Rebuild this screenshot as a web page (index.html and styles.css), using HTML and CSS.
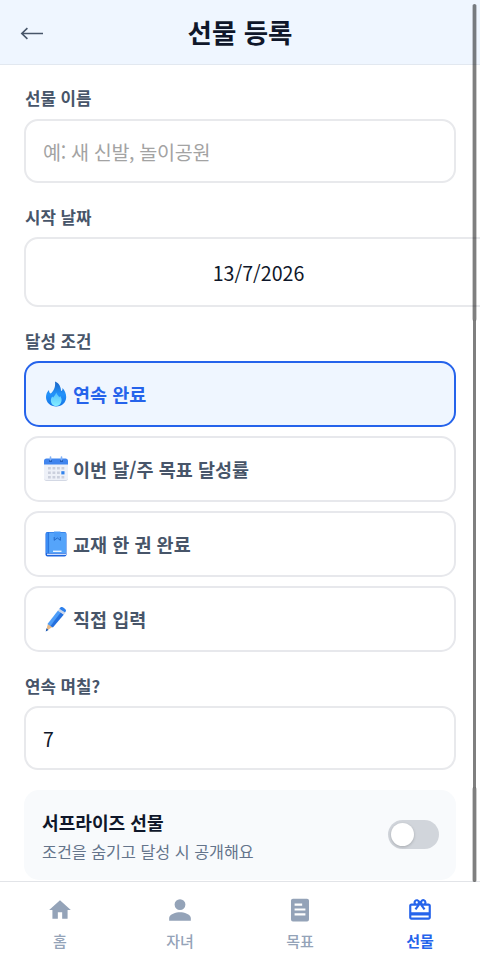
FILE: index.html
```html
<!DOCTYPE html>
<html lang="ko">
<head>
<meta charset="utf-8">
<meta name="viewport" content="width=device-width, initial-scale=1">
<title>선물 등록</title>
<link rel="stylesheet" href="styles.css">
</head>
<body>
<div class="app">
  <header class="header">
    <button class="back" aria-label="뒤로">
      <svg width="24" height="14" viewBox="0 0 24 14" fill="none" stroke="#475569" stroke-width="1.6"><path d="M23 7.500H2M7.400 2.100 1.800 7.500l5.600 5.400"/></svg>
    </button>
    <h1 class="title">선물 등록</h1>
  </header>

  <main class="form">
    <section class="field">
      <label class="label">선물 이름</label>
      <div class="input placeholder">예: 새 신발, 놀이공원</div>
    </section>
    <section class="field">
      <label class="label">시작 날짜</label>
      <div class="input date">13/7/2026</div>
    </section>
    <section class="field">
      <label class="label">달성 조건</label>
      <div class="options">
        <button class="option selected">
          <svg class="emoji" viewBox="0 0 24 26">
            <defs><linearGradient id="flame" x1="0" y1="0" x2="0" y2="1"><stop offset="0" stop-color="#1763c4"/><stop offset=".5" stop-color="#2393fb"/><stop offset="1" stop-color="#1574e6"/></linearGradient>
            <linearGradient id="core" x1="0" y1="0" x2="0" y2="1"><stop offset="0" stop-color="#55c0ff"/><stop offset="1" stop-color="#83edff"/></linearGradient></defs>
            <path fill="url(#flame)" d="M11 .5C15 2 17 6 17 10c1 0 1.700-1.200 1.500-3 2.300 2.500 3.700 5.500 3.700 9 0 5.500-4.200 9.500-10 9.500S2 21.500 2 16c0-3 1.200-5.200 3-7 0 1.700.5 3 1.600 3.500C9.500 10.500 11.800 6 11 .5z"/>
            <path fill="url(#core)" d="M12.200 11.500c.5 2 2.300 3 3 4.800l1-1.300c1 1.500 1.600 3 1.300 5-.4 3-2.700 5-5.400 5s-5-2-5.200-5c-.1-1.800.4-3.200 1.300-4.500l1 1c1-1.600 2.500-2.700 3-5z"/>
          </svg>
          <span>연속 완료</span>
        </button>
        <button class="option">
          <svg class="emoji" viewBox="0 0 24 26">
            <path fill="#eef1f8" d="M0 7h24v15.500a2.500 2.500 0 0 1-2.500 2.500h-19A2.500 2.500 0 0 1 0 22.500z"/>
            <path fill="#d3d8e4" d="M.2 22.500c.2 1.600 1 2.500 2.500 2.500h18.600c1.500 0 2.400-.9 2.600-2.500-.6 1-1.300 1.500-2.600 1.500H2.700c-1.300 0-2-.5-2.500-1.500z"/>
            <path fill="#4185ee" d="M0 8.500V5A2.500 2.500 0 0 1 2.500 2.500h19A2.500 2.500 0 0 1 24 5v3.500z"/>
            <path fill="#1c54ac" d="M5 4.200h3v1.600H5zM16 4.200h3v1.600h-3z"/>
            <path stroke="#7fb0f8" stroke-width="1.600" stroke-linecap="round" d="M6.500 1v3M17.500 1v3"/>
            <path fill="#cbd0dd" d="M4 11h2.800v2.500H4zM8.500 11h2.800v2.500H8.500zM13 11h2.800v2.500H13zM17.500 11h2.800v2.500h-2.800zM4 15.500h2.800V18H4zM8.500 15.500h2.800V18H8.500zM13 15.500h2.800V18H13zM4 20h2.800v2.500H4zM8.500 20h2.800v2.500H8.500zM13 20h2.800v2.500H13zM17.500 20h2.800v2.500h-2.800z"/>
            <path fill="#3283ed" d="M17.300 15.200h3.200v3.200h-3.200z"/>
          </svg>
          <span>이번 달/주 목표 달성률</span>
        </button>
        <button class="option">
          <svg class="emoji" viewBox="0 0 24 26">
            <rect x="1.500" y="1" width="21" height="24.500" rx="2" fill="#1e66df"/>
            <path fill="#e1edff" d="M3 22.700h19v1.200H3z"/>
            <path fill="#55a4fa" d="M4.500 1.500H21A1.200 1.200 0 0 1 22 2.700V22H4.500z"/>
            <path fill="#3b8df4" d="M2 3c0-1 .6-1.500 1.500-1.500h.8V22H2z"/>
            <path stroke="#256fd9" stroke-width=".7" d="M4.600 1.500V22"/>
            <path fill="#4b9cf8" d="M10 .5h6.500V9.300L13.300 7 10 9.300z"/>
            <path fill="none" stroke="#1b5dbd" stroke-width=".8" d="M10.200 6v3.300L13.300 7l3.100 2.300V6"/>
            <path fill="#e8f3ff" d="M9 19.600h8.500V21H9z"/>
          </svg>
          <span>교재 한 권 완료</span>
        </button>
        <button class="option">
          <svg class="emoji" viewBox="0 0 24 26">
            <path fill="#e6b887" d="m4 17.500 4.500 3.500-6.500 4z"/>
            <path fill="#1556b5" d="m2.500 22.200 2 1.700L1.700 25.500z"/>
            <path fill="#4d9df8" d="M3.500 18 14 4.500l4 2.200L6.500 20z"/>
            <path fill="#2470de" d="m6.300 20 10.600-13.700 3 2.200L8.900 21.500z"/>
            <path fill="#cad5e9" d="m13.800 4.700 1.600-2 6 4-1.600 2z"/>
            <path fill="#2d80ec" d="m15.300 2.800 1.400-1.600c.9-1 5.600 1.700 5.300 3.700l-1 1.700z"/>
          </svg>
          <span>직접 입력</span>
        </button>
      </div>
    </section>
    <section class="field">
      <label class="label">연속 며칠?</label>
      <div class="input">7</div>
    </section>
    <section class="surprise">
      <div class="copy">
        <div class="name">서프라이즈 선물</div>
        <div class="hint">조건을 숨기고 달성 시 공개해요</div>
      </div>
      <div class="toggle" role="switch" aria-checked="false"><div class="knob"></div></div>
    </section>
  </main>

  <nav class="nav">
    <a class="tab"><svg class="icon" viewBox="0 0 24 24"><path d="M10 20v-6h4v6h5v-8h3L12 3 2 12h3v8z"/></svg><span>홈</span></a>
    <a class="tab"><svg class="icon" viewBox="0 0 24 24"><path d="M12 12a5 5 0 1 0 0-10 5 5 0 0 0 0 10zm0 2c-3.500 0-10 1.700-10 5.300V22h20v-2.700C22 15.700 15.500 14 12 14z"/></svg><span>자녀</span></a>
    <a class="tab"><svg class="icon" viewBox="0 0 24 24"><path fill-rule="evenodd" d="M5.500 1.500h13A1.800 1.800 0 0 1 20.300 3.300v17.400a1.800 1.800 0 0 1-1.800 1.800h-13a1.800 1.800 0 0 1-1.800-1.800V3.300A1.800 1.800 0 0 1 5.500 1.500zM7 6v2h7V6zM7 10.500v2h10v-2zM7 15v2h10v-2z"/></svg><span>목표</span></a>
    <a class="tab active"><svg class="icon" viewBox="0 0 24 24"><path d="M20 6h-2.180c.11-.31.18-.65.18-1a2.996 2.996 0 0 0-5.500-1.650l-.5.67-.5-.68C10.960 2.540 10.050 2 9 2 7.340 2 6 3.340 6 5c0 .35.070.69.180 1H4c-1.110 0-1.990.890-1.990 2L2 19c0 1.110.890 2 2 2h16c1.110 0 2-.890 2-2V8c0-1.110-.890-2-2-2zm-5-2c.55 0 1 .45 1 1s-.45 1-1 1-1-.45-1-1 .45-1 1-1zM9 4c.55 0 1 .45 1 1s-.45 1-1 1-1-.45-1-1 .45-1 1-1zm11 15H4v-2h16v2zm0-5H4V8h5.080L7 10.830 8.620 12 12 7.400l3.380 4.600L17 10.830 14.920 8H20v6z"/></svg><span>선물</span></a>
  </nav>
</div>
<div class="scroll track"></div>
<div class="scroll first"></div>
<div class="scroll last"></div>
</body>
</html>
```
FILE: styles.css
```css
* { box-sizing: border-box; }
body {
  margin: 0;
  overflow: hidden;
  background: #fff;
  color: #0f172a;
  font-family: "Noto Sans CJK KR", "Noto Sans", sans-serif;
}
button { font: inherit; border: 0; background: none; padding: 0; }
svg { display: block; flex: none; }
.app { height: 969px; display: flex; flex-direction: column; overflow: hidden; }

.header {
  flex: none;
  height: 65px;
  display: grid;
  grid-template-columns: 60px 1fr 60px;
  align-items: center;
  background: #eff6ff;
  border-bottom: 1px solid #e2e8f0;
}
.back { padding: 2px 0 0 20px; }
.title {
  margin: 0;
  text-align: center;
  font-size: 26.500px;
  line-height: 40px;
  font-weight: 700;
}

.form {
  flex: 1;
  min-height: 0;
  overflow: hidden;
  padding: 21px 24px 0;
}
.field { margin-bottom: 22px; }
.field:nth-child(4) { margin-bottom: 20px; }
.label {
  display: block;
  height: 24px;
  margin-bottom: 9px;
  padding-left: 1px;
  font-size: 16.800px;
  line-height: 24px;
  font-weight: 700;
  color: #475569;
}
.field:nth-child(n+2) .label { margin-bottom: 8px; }
.input {
  width: 432px;
  height: 64px;
  padding: 0 17px;
  border: 2px solid #e8e9ec;
  border-radius: 14px;
  font-size: 19.600px;
  line-height: 61px;
}
.placeholder { color: #a3a3a3; letter-spacing: -.35px; }
.date { width: 469px; height: 70px; line-height: 67px; text-align: center; }

.options { display: grid; gap: 9.300px; }
.option {
  height: 66px;
  display: flex;
  align-items: center;
  gap: 5px;
  padding: 0 18px;
  border: 2px solid #e7e8ec;
  border-radius: 15px;
  background: #fff;
  color: #475569;
  font-size: 18.500px;
  line-height: 28px;
  font-weight: 700;
}
.option:nth-child(n+2) { height: 65.800px; }
.selected { border-color: #2563eb; background: #eff6ff; color: #2563eb; }
.emoji { width: 24px; height: 26px; }

.surprise {
  height: 90px;
  display: flex;
  align-items: center;
  justify-content: space-between;
  padding: 0 17px 1px 18px;
  border-radius: 15px;
  background: #f8fafc;
}
.copy { padding-top: 3px; }
.name { font-size: 18.100px; line-height: 29px; font-weight: 700; }
.hint { font-size: 16.200px; line-height: 28px; color: #64748b; }
.toggle {
  width: 51px;
  height: 29px;
  padding: 3px;
  border-radius: 15px;
  background: #d1d5db;
}
.knob {
  width: 23px;
  height: 23px;
  border-radius: 50%;
  background: #fff;
  box-shadow: 0 1px 3px rgba(0, 0, 0, .2);
}

.nav {
  flex: none;
  height: 88px;
  display: grid;
  grid-template-columns: repeat(4, 1fr);
  border-top: 1px solid #e2e4e8;
  background: #fff;
}
.tab {
  display: flex;
  flex-direction: column;
  align-items: center;
  gap: 7px;
  padding-top: 15px;
  color: #94a3b8;
  font-size: 15px;
  line-height: 22px;
  font-weight: 500;
}
.active { color: #2563eb; font-weight: 700; }
.icon { width: 26px; height: 26px; fill: currentColor; }

/* Overlay scrollbars float above the page content. */
.scroll { position: fixed; border-radius: 3px; }
.track { left: 473px; top: 4px; width: 3px; height: 878px; background: rgba(0, 0, 0, .5); }
.first, .last {
  left: 472px;
  width: 5px;
  border: solid rgba(0, 0, 0, .2);
  border-width: 0 1px;
}
.first { top: 4px; height: 317px; }
.last { top: 787px; height: 95px; }
```
